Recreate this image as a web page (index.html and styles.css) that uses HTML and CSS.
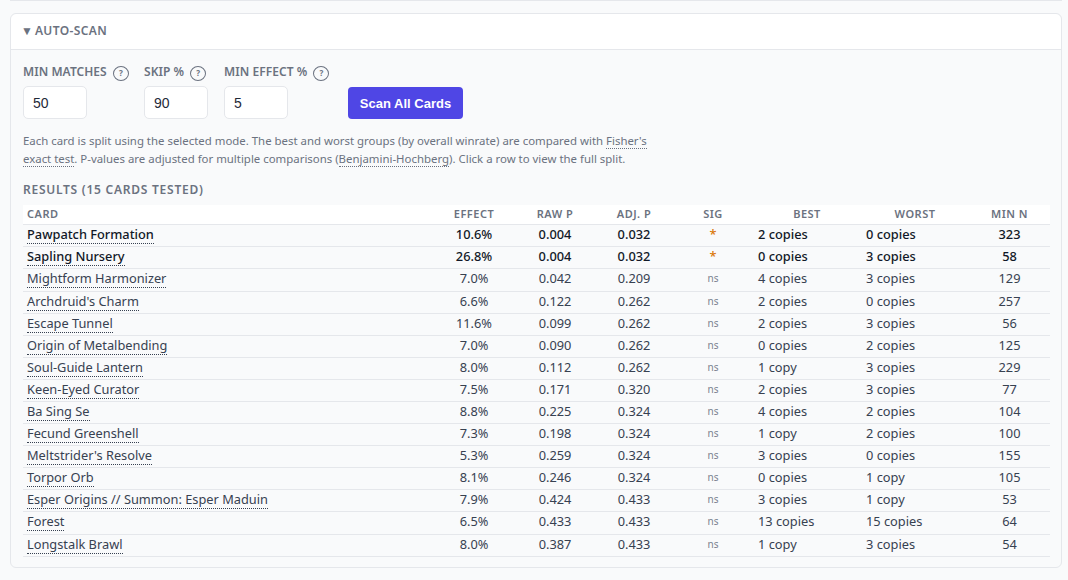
FILE: index.html
```html
<!DOCTYPE html>
<html lang="en">
<head>
    <meta charset="UTF-8">
    <title>Auto-Scan</title>
    <link rel="stylesheet" href="styles.css">
</head>
<body>
    <div class="prev-card"></div>
    <section class="panel">
        <div class="panel-header"><span class="caret">&#9660;</span>AUTO-SCAN</div>
        <div class="panel-body">
            <div class="controls">
                <div class="field field-matches">
                    <label>MIN MATCHES <span class="help">?</span></label>
                    <input type="text" value="50">
                </div>
                <div class="field field-skip">
                    <label>SKIP % <span class="help">?</span></label>
                    <input type="text" value="90">
                </div>
                <div class="field field-effect">
                    <label>MIN EFFECT % <span class="help">?</span></label>
                    <input type="text" value="5">
                </div>
                <button class="scan-btn">Scan All Cards</button>
            </div>
            <p class="note">Each card is split using the selected mode. The best and worst groups (by overall winrate) are compared with <span class="term">Fisher's</span> <span class="term">exact test</span>. P-values are adjusted for multiple comparisons (<span class="term">Benjamini-Hochberg</span>). Click a row to view the full split.</p>
            <h3 class="results-title">RESULTS (15 CARDS TESTED)</h3>
            <table class="results">
                <colgroup>
                    <col class="c-card"><col class="c-effect"><col class="c-raw"><col class="c-adj"><col class="c-sig"><col class="c-best"><col class="c-worst"><col class="c-min">
                </colgroup>
                <thead>
                    <tr><th class="name">CARD</th><th>EFFECT</th><th>RAW P</th><th>ADJ. P</th><th>SIG</th><th>BEST</th><th>WORST</th><th>MIN N</th></tr>
                </thead>
                <tbody>
                    <tr class="hit"><td class="name"><span class="card">Pawpatch Formation</span></td><td>10.6%</td><td>0.004</td><td>0.032</td><td class="star">*</td><td class="group">2 copies</td><td class="group">0 copies</td><td>323</td></tr>
                    <tr class="hit"><td class="name"><span class="card">Sapling Nursery</span></td><td>26.8%</td><td>0.004</td><td>0.032</td><td class="star">*</td><td class="group">0 copies</td><td class="group">3 copies</td><td>58</td></tr>
                    <tr><td class="name"><span class="card">Mightform Harmonizer</span></td><td>7.0%</td><td>0.042</td><td>0.209</td><td class="ns">ns</td><td class="group">4 copies</td><td class="group">3 copies</td><td>129</td></tr>
                    <tr><td class="name"><span class="card">Archdruid's Charm</span></td><td>6.6%</td><td>0.122</td><td>0.262</td><td class="ns">ns</td><td class="group">2 copies</td><td class="group">0 copies</td><td>257</td></tr>
                    <tr><td class="name"><span class="card">Escape Tunnel</span></td><td>11.6%</td><td>0.099</td><td>0.262</td><td class="ns">ns</td><td class="group">2 copies</td><td class="group">3 copies</td><td>56</td></tr>
                    <tr><td class="name"><span class="card">Origin of Metalbending</span></td><td>7.0%</td><td>0.090</td><td>0.262</td><td class="ns">ns</td><td class="group">0 copies</td><td class="group">2 copies</td><td>125</td></tr>
                    <tr><td class="name"><span class="card">Soul-Guide Lantern</span></td><td>8.0%</td><td>0.112</td><td>0.262</td><td class="ns">ns</td><td class="group">1 copy</td><td class="group">3 copies</td><td>229</td></tr>
                    <tr><td class="name"><span class="card">Keen-Eyed Curator</span></td><td>7.5%</td><td>0.171</td><td>0.320</td><td class="ns">ns</td><td class="group">2 copies</td><td class="group">3 copies</td><td>77</td></tr>
                    <tr><td class="name"><span class="card">Ba Sing Se</span></td><td>8.8%</td><td>0.225</td><td>0.324</td><td class="ns">ns</td><td class="group">4 copies</td><td class="group">2 copies</td><td>104</td></tr>
                    <tr><td class="name"><span class="card">Fecund Greenshell</span></td><td>7.3%</td><td>0.198</td><td>0.324</td><td class="ns">ns</td><td class="group">1 copy</td><td class="group">2 copies</td><td>100</td></tr>
                    <tr><td class="name"><span class="card">Meltstrider's Resolve</span></td><td>5.3%</td><td>0.259</td><td>0.324</td><td class="ns">ns</td><td class="group">3 copies</td><td class="group">0 copies</td><td>155</td></tr>
                    <tr><td class="name"><span class="card">Torpor Orb</span></td><td>8.1%</td><td>0.246</td><td>0.324</td><td class="ns">ns</td><td class="group">0 copies</td><td class="group">1 copy</td><td>105</td></tr>
                    <tr><td class="name"><span class="card">Esper Origins // Summon: Esper Maduin</span></td><td>7.9%</td><td>0.424</td><td>0.433</td><td class="ns">ns</td><td class="group">3 copies</td><td class="group">1 copy</td><td>53</td></tr>
                    <tr><td class="name"><span class="card">Forest</span></td><td>6.5%</td><td>0.433</td><td>0.433</td><td class="ns">ns</td><td class="group">13 copies</td><td class="group">15 copies</td><td>64</td></tr>
                    <tr><td class="name"><span class="card">Longstalk Brawl</span></td><td>8.0%</td><td>0.387</td><td>0.433</td><td class="ns">ns</td><td class="group">1 copy</td><td class="group">3 copies</td><td>54</td></tr>
                </tbody>
            </table>
        </div>
    </section>
</body>
</html>
```

FILE: styles.css
```css
html, body {
    margin: 0;
    padding: 0;
    height: 580px;
    overflow: hidden;
}

body {
    font-family: "Noto Sans", sans-serif;
    background-color: #f9fafb;
    color: #374151;
    padding: 0 6px 0 10px;
}

.prev-card {
    height: 1px;
    background-color: #e5e7eb;
    margin-bottom: 12px;
}

.panel {
    border: 1px solid #e5e7eb;
    border-radius: 6px;
    background-color: #f9fafb;
    height: 555px;
    box-sizing: border-box;
}

.panel-header {
    height: 35px;
    line-height: 34px;
    padding-left: 10px;
    background-color: #fff;
    border-bottom: 1px solid #e5e7eb;
    border-radius: 6px 6px 0 0;
    font-size: 12px;
    font-weight: 600;
    letter-spacing: 0.4px;
    color: #6b7280;
}

.caret {
    font-size: 12px;
    letter-spacing: 0;
    margin-right: 2px;
}

.panel-body {
    padding: 13px 11px 0 12px;
}

.controls {
    display: flex;
    align-items: flex-end;
}

.field label {
    display: block;
    font-size: 12px;
    font-weight: 600;
    letter-spacing: 0.05px;
    color: #6b7280;
    line-height: 18px;
    margin-bottom: 5px;
}

.field input {
    display: block;
    width: 64px;
    height: 33px;
    box-sizing: border-box;
    border: 1px solid #e5e7eb;
    border-radius: 5px;
    background-color: #fff;
    padding: 0 9px;
    font-family: "Liberation Sans", sans-serif;
    font-size: 14px;
    color: #1f2937;
}

.field-matches {
    width: 121px;
}

.field-skip {
    width: 80px;
}

.field-effect {
    width: 124px;
}

.help {
    display: inline-block;
    width: 14px;
    height: 13px;
    line-height: 12px;
    margin-left: 3px;
    border: 1px solid #6b7280;
    border-radius: 50%;
    text-align: center;
    font-size: 8px;
    font-weight: 700;
    vertical-align: 0;
}

.scan-btn {
    width: 115px;
    height: 32px;
    border: none;
    border-radius: 4px;
    background-color: #4f46e5;
    color: #fff;
    font-family: "Liberation Sans", sans-serif;
    font-size: 13px;
    font-weight: 700;
}

.note {
    width: 640px;
    margin: 13px 0 0 0;
    font-size: 11.42px;
    line-height: 18px;
    color: #6b7280;
}

.term {
    border-bottom: 1px dotted #6b7280;
}

.results-title {
    margin: 13px 0 6.25px 0;
    font-size: 12px;
    font-weight: 600;
    letter-spacing: 0.75px;
    line-height: 18px;
    color: #6b7280;
}

.results {
    width: 1027px;
    table-layout: fixed;
    border-collapse: separate;
    border-spacing: 0;
    font-size: 12.8px;
}

.c-card { width: 410px; }
.c-effect { width: 82px; }
.c-raw { width: 80px; }
.c-adj { width: 78px; }
.c-sig { width: 80px; }
.c-best { width: 108px; }
.c-worst { width: 108px; }
.c-min { width: 81px; }

.results th {
    height: 17px;
    padding: 0 4px 2px 4px;
    background-color: #fff;
    border-bottom: 1px solid #e5e7eb;
    font-size: 11px;
    font-weight: 600;
    letter-spacing: 0.5px;
    color: #6b7280;
    text-align: center;
}

.results td {
    padding: 0 4px 2px 4px;
    line-height: 19.09px;
    border-bottom: 1px solid #e5e7eb;
    text-align: center;
    color: #374151;
}

.results .name,
.results .group {
    text-align: left;
}

.results .group {
    padding-left: 5px;
}

.card {
    border-bottom: 1px dotted #374151;
}

.hit td {
    font-weight: 500;
    color: #111827;
}

.results .star {
    color: #d97706;
}

.results .ns {
    font-size: 10px;
    color: #7b8390;
}
```
